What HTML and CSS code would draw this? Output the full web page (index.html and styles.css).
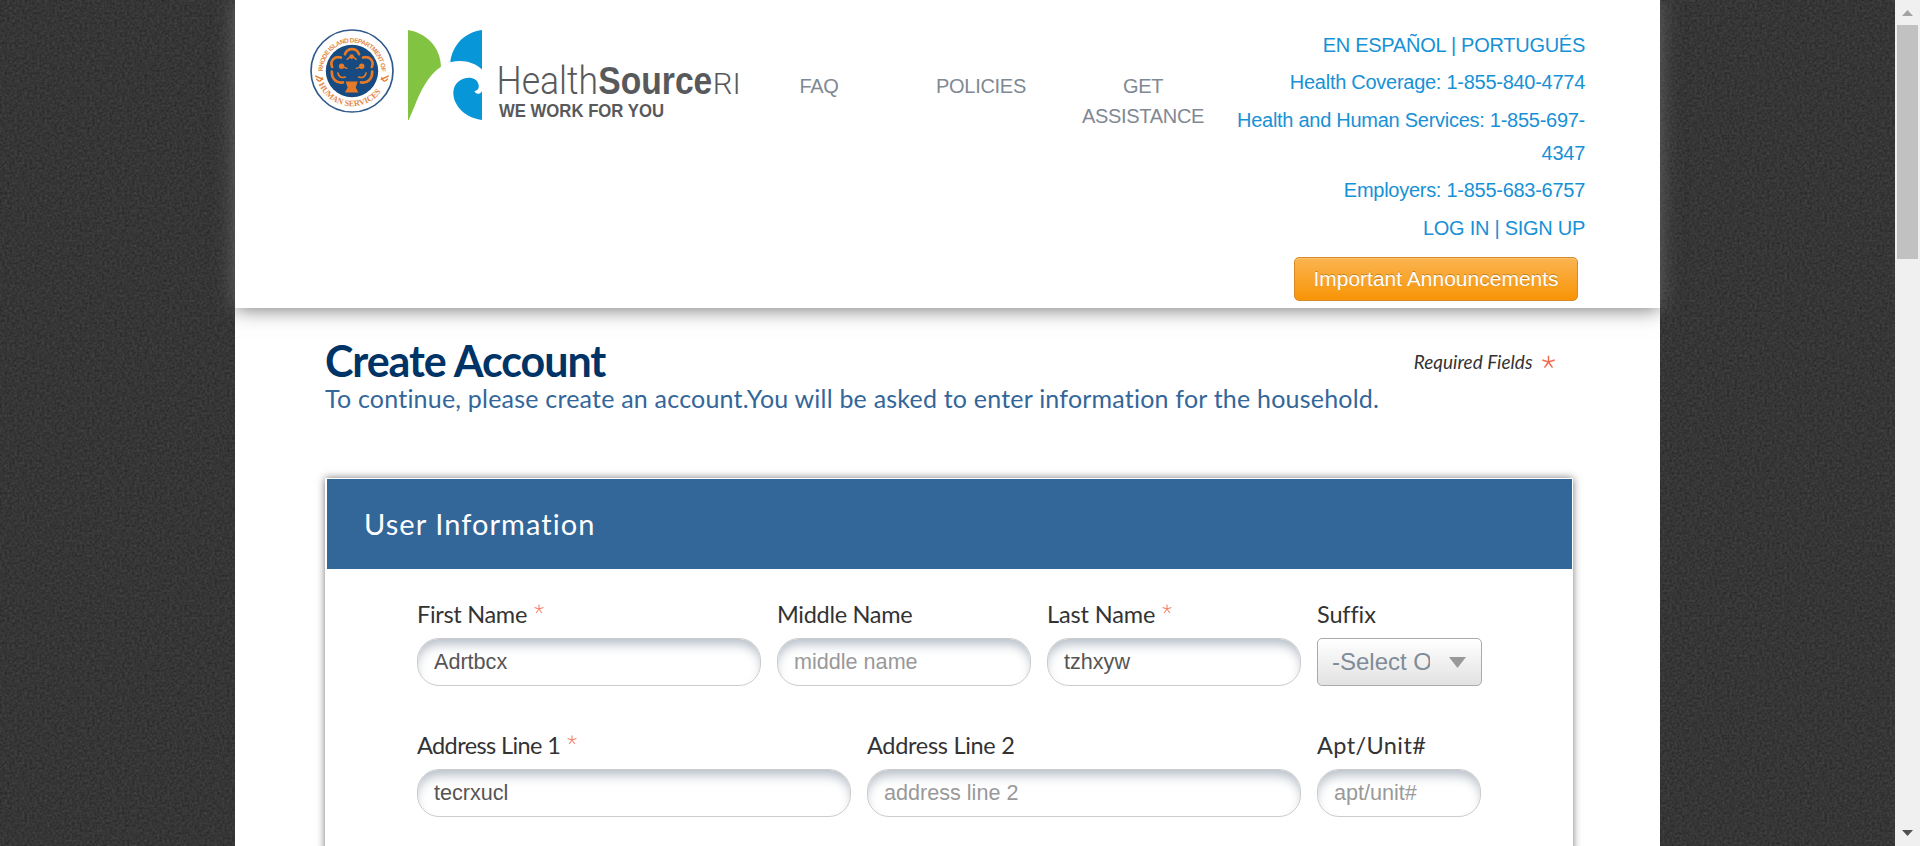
FILE: index.html
```html
<!DOCTYPE html>
<html lang="en">
<head>
<meta charset="utf-8">
<title>Create Account</title>
<link rel="stylesheet" href="styles.css">
</head>
<body>
<div class="window">
<div class="backdrop">
<div class="page">
  <header class="header">
    <div class="brand">
      <svg class="seal" viewBox="60 59 250 250">
        <defs>
          <path id="arc-top" d="M98 186A87 87 0 1 1 272 186"/>
          <path id="arc-bottom" d="M80 206A108 108 0 0 0 290 206"/>
        </defs>
        <circle cx="185" cy="184" r="122" fill="#fff" stroke="#315a8c" stroke-width="5"/>
        <circle cx="185" cy="184" r="78" fill="#174a80"/>
        <g class="seal-text">
          <text class="seal-top"><textPath href="#arc-top" startOffset="1">RHODE ISLAND DEPARTMENT OF</textPath></text>
          <text font-size="25"><textPath href="#arc-bottom" startOffset="18" textLength="226">HUMAN SERVICES</textPath></text>
        </g>
        <g fill="none" stroke="#e67a26" stroke-width="8" stroke-linecap="round">
          <path d="M164 134C172 114 198 114 206 134"/>
          <path d="M152 144C130 138 119 156 126 172"/>
          <path d="M218 144C240 138 251 156 244 172"/>
          <path d="M125 186C124 208 140 222 158 218"/>
          <path d="M245 186C246 208 230 222 212 218"/>
          <path d="M143 190C145 201 154 206 165 202" stroke-width="5"/>
          <path d="M227 190C225 201 216 206 205 202" stroke-width="5"/>
          <path d="M171 149Q184 134 197 149" stroke-width="5"/>
          <path d="M158 172L170 176M210 172L198 176" stroke-width="4"/>
          <path d="M80 208Q90 222 96 204M77 199L98 209M290 208Q280 222 274 204M293 199L272 209" stroke-width="4"/>
        </g>
        <circle cx="184" cy="141" r="7" fill="#e67a26"/>
        <circle cx="154" cy="170" r="8" fill="#e67a26"/>
        <circle cx="214" cy="170" r="8" fill="#e67a26"/>
        <path d="M166 215H202L196 233L204 248H164L172 233Z" fill="#e67a26"/>
      </svg>
      <svg class="mark" viewBox="354 60 223 270">
        <path d="M354 60C408 68 452 112 453 170C414 196 390 246 374 288L356 330H354Z" fill="#82c341"/>
        <path d="M577 60V179C552 155 516 147 481 157C487 104 526 66 577 60Z" fill="#0797d9"/>
        <path d="M577 330C530 326 489 289 490 247C491 220 513 203 538 203C557 204 569 217 566 233C564 238 560 242 553 244C560 256 572 252 577 242Z" fill="#0797d9"/>
      </svg>
      <svg class="wordmark" viewBox="0 0 246 60">
        <text class="w-thin" x="-2.5" y="33.7" font-size="38.5" textLength="101.5" lengthAdjust="spacingAndGlyphs">Health</text>
        <text class="w-bold" x="99.3" y="33.7" font-size="38" textLength="114" lengthAdjust="spacingAndGlyphs">Source</text>
        <text class="w-thin" x="213.8" y="33.7" font-size="29" textLength="28" lengthAdjust="spacingAndGlyphs">RI</text>
        <text class="w-bold" x="0" y="57" font-size="17.5" textLength="165" lengthAdjust="spacingAndGlyphs">WE WORK FOR YOU</text>
      </svg>
    </div>
    <nav class="nav">
      <a>FAQ</a>
      <a>POLICIES</a>
      <a>GET ASSISTANCE</a>
    </nav>
    <div class="contact">
      <p>EN ESPAÑOL | PORTUGUÉS</p>
      <p>Health Coverage: 1-855-840-4774</p>
      <p>Health and Human Services: 1-855-697-<br>4347</p>
      <p>Employers: 1-855-683-6757</p>
      <p>LOG IN | SIGN UP</p>
      <button class="announce">Important Announcements</button>
    </div>
  </header>
  <main class="main">
    <div class="title-row">
      <h1>Create Account</h1>
      <p class="required">Required Fields <svg class="star-big" viewBox="0 0 14 14"><path d="M7 7V.8M7 7L.8 5M7 7L13.2 5M7 7L3 12.6M7 7L11 12.6"/></svg></p>
    </div>
    <p class="subtitle">To continue, please create an account.You will be asked to enter information for the household.</p>
    <section class="card">
      <h2>User Information</h2>
      <form class="form">
        <div class="row row-name">
          <div class="field"><label><span class="tight">First Name</span><svg class="star" viewBox="0 0 14 14"><path d="M7 7V.8M7 7L.8 5M7 7L13.2 5M7 7L3 12.6M7 7L11 12.6"/></svg></label><input type="text" value="Adrtbcx"></div>
          <div class="field"><label><span class="tight">Middle Name</span></label><input type="text" placeholder="middle name"></div>
          <div class="field"><label><span class="snug">Last Name</span><svg class="star" viewBox="0 0 14 14"><path d="M7 7V.8M7 7L.8 5M7 7L13.2 5M7 7L3 12.6M7 7L11 12.6"/></svg></label><input type="text" value="tzhxyw"></div>
          <div class="field"><label><span class="snug">Suffix</span></label><div class="select"><span class="select-value">-Select O</span><svg class="caret" viewBox="0 0 17 11"><path d="M0 0H17L8.5 11Z"/></svg></div></div>
        </div>
        <div class="row row-address">
          <div class="field"><label><span class="tighter">Address Line 1</span><svg class="star" viewBox="0 0 14 14"><path d="M7 7V.8M7 7L.8 5M7 7L13.2 5M7 7L3 12.6M7 7L11 12.6"/></svg></label><input type="text" value="tecrxucl"></div>
          <div class="field"><label><span class="tight">Address Line 2</span></label><input type="text" placeholder="address line 2"></div>
          <div class="field"><label><span class="loose">Apt/Unit#</span></label><input type="text" placeholder="apt/unit#"></div>
        </div>
      </form>
    </section>
  </main>
</div>
</div>
<div class="scrollbar">
  <svg class="arrow arrow-up" viewBox="0 0 11 6"><path d="M0 6H11L5.5 0Z"/></svg>
  <div class="thumb"></div>
  <svg class="arrow arrow-down" viewBox="0 0 11 6"><path d="M0 0H11L5.5 6Z"/></svg>
</div>
</div>
</body>
</html>
```
FILE: styles.css
```css
* { box-sizing: border-box; }
body { margin: 0; font-family: "Liberation Sans", Arial, sans-serif; overflow: hidden; }
h1, h2, p { margin: 0; font-weight: normal; }

.window { display: flex; height: 846px; overflow: hidden; }
.backdrop {
  flex: 1;
  padding: 0 235px;
  background-color: #343434;
  background-image: url("data:image/svg+xml,%3Csvg xmlns='http://www.w3.org/2000/svg' width='300' height='300'%3E%3Cfilter id='n' x='0' y='0' width='100%25' height='100%25' color-interpolation-filters='sRGB'%3E%3CfeTurbulence type='fractalNoise' baseFrequency='.4' numOctaves='2' seed='4' stitchTiles='stitch'/%3E%3CfeColorMatrix values='.15 0 0 0 .136 .15 0 0 0 .136 .15 0 0 0 .136 0 0 0 0 1'/%3E%3C/filter%3E%3Crect width='300' height='300' filter='url(%23n)'/%3E%3C/svg%3E");
  overflow: hidden;
}
.page { width: 1425px; height: 846px; background: #fff; }

.header {
  display: flex;
  height: 308px;
  background: #fff;
  box-shadow: 0 0 20px #666;
}
.brand { display: flex; flex: none; width: 503px; padding: 30px 0 0 74.5px; }
.seal { flex: none; width: 84px; height: 84px; margin-top: -1px; }
.mark { flex: none; width: 74.3px; height: 90px; margin-left: 14.5px; }
.wordmark { width: 246px; height: 60px; margin: 30px 0 0 16.5px; overflow: visible; flex: none; }
.w-thin { font-family: Roboto, sans-serif; font-weight: 300; fill: #58595b; }
.w-bold { font-family: "Liberation Sans", Arial, sans-serif; font-weight: 700; fill: #58595b; }
.seal-text { font-family: "Liberation Serif", serif; font-weight: 700; fill: #e38a4a; }
.seal-top { font-family: "Liberation Sans Narrow", "Liberation Sans", Arial, sans-serif; font-size: 19px; letter-spacing: -1.6px; }

.nav { display: flex; flex: none; padding-top: 70.5px; }
.nav a { width: 162px; padding: 0 15px; text-align: center; font-size: 20px; line-height: 30px; letter-spacing: -0.3px; color: #7f8993; }
.contact { flex: none; width: 361px; padding-top: 28.5px; text-align: right; font-size: 20px; line-height: 33px; letter-spacing: -.27px; color: #1791d6; }
.contact p { margin-bottom: 4.6px; white-space: nowrap; }
.announce {
  width: 284px; height: 44px; margin: 7.5px 7px 0 0; padding: 0;
  border: 1px solid #d8892a; border-radius: 5px;
  background: linear-gradient(#fbb450, #f89406);
  box-shadow: inset 0 1px 0 rgba(255,255,255,.2);
  font: 21px "Liberation Sans", Arial, sans-serif;
  color: #fff; text-shadow: 0 -1px 0 rgba(0,0,0,.25);
}

.main { padding: 27px 87px 0 90px; font-family: Lato, sans-serif; font-variant-ligatures: none; }
.title-row { display: flex; justify-content: space-between; height: 48px; }
h1 { font-size: 43px; line-height: 52px; font-weight: 700; letter-spacing: -1.05px; color: #003366; }
.required { padding: 15px 17px 0 0; font-size: 18.9px; line-height: 24px; font-style: italic; color: #333; letter-spacing: .05px; }
.star-big { width: 15px; height: 14px; margin-left: 4px; }
.star-big path, .star path { fill: none; stroke: #f26c4f; stroke-width: 1.5; }
.subtitle { height: 95px; font-size: 25px; line-height: 30px; letter-spacing: .21px; color: #336699; white-space: nowrap; }
.card { height: 420px; padding: 1px 1px 0 2px; background: #fff; box-shadow: 0 0 8px #777; }
h2 { height: 90px; padding-left: 37px; font-size: 29px; line-height: 89px; background: #336699; color: #fff; letter-spacing: 1.07px; }
.form { padding: 33px 0 0 90px; }
.row { display: grid; column-gap: 16px; height: 131px; }
.row-name { grid-template-columns: 344px 254px 254px 165px; }
.row-address { grid-template-columns: 434px 434px 164px; }
.field { min-width: 0; }
label { display: flex; align-items: flex-start; height: 36px; font-size: 23.5px; line-height: 24px; color: #333; white-space: nowrap; }
.snug { letter-spacing: -.12px; }
.tight { letter-spacing: -.3px; }
.tighter { letter-spacing: -.6px; }
.loose { letter-spacing: .4px; }
.star { width: 10px; height: 10px; margin: 2px 0 0 7px; }
.star path { opacity: .85; }
input {
  display: block; width: 100%; height: 48px; padding: 0 16px;
  border: 1px solid #ccc; border-radius: 22px;
  background: #fff; box-shadow: inset 0 8px 12px -3px #b4bcc6;
  font: 21.6px "Liberation Sans", Arial, sans-serif; color: #555;
}
input::placeholder { color: #999; opacity: 1; }
.select {
  display: flex; align-items: center; height: 48px; padding: 0 15px 0 14px;
  border: 1px solid #aaa; border-radius: 5px; background: linear-gradient(#fff, #e2e2e2);
  font-family: "Liberation Sans", Arial, sans-serif;
}
.select-value { width: 98px; overflow: hidden; white-space: nowrap; font-size: 24px; color: #7f8b98; }
.caret { width: 17px; height: 11px; margin-left: 19px; fill: #999; }

.scrollbar { display: flex; flex-direction: column; align-items: center; width: 25px; background: #f0f0f0; }
.arrow { width: 11px; height: 6px; flex: none; }
.arrow-up { margin: 10px 0 9px; fill: #a3a3a3; }
.arrow-down { margin: auto 0 10px; fill: #505050; }
.thumb { width: 21px; height: 234px; background: #c1c1c1; }
```
